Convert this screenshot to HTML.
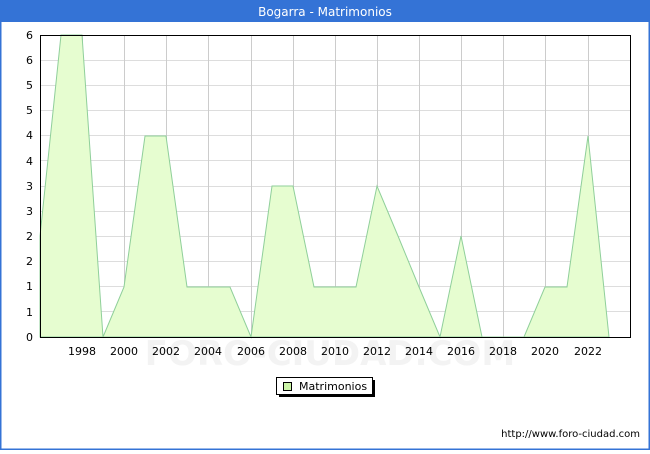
<!DOCTYPE html>
<html><head><style>
html,body{margin:0;padding:0;}
body{width:650px;height:450px;overflow:hidden;font-family:"DejaVu Sans","Liberation Sans",sans-serif;}
</style></head><body>
<svg width="650" height="450" xmlns="http://www.w3.org/2000/svg" font-family="DejaVu Sans, Liberation Sans, sans-serif">
<rect x="0" y="0" width="650" height="450" fill="#fff"/>
<rect x="0.5" y="0.5" width="649" height="449" fill="none" stroke="#3473d6" stroke-width="2"/>
<rect x="0" y="0" width="650" height="22" fill="#3473d6"/>
<text x="325" y="16" fill="#fff" font-size="12" text-anchor="middle">Bogarra - Matrimonios</text>
<g stroke="#dddddd" stroke-width="1">
<line x1="40" x2="630" y1="60.5" y2="60.5"/><line x1="40" x2="630" y1="85.5" y2="85.5"/>
<line x1="40" x2="630" y1="110.5" y2="110.5"/><line x1="40" x2="630" y1="135.5" y2="135.5"/>
<line x1="40" x2="630" y1="160.5" y2="160.5"/><line x1="40" x2="630" y1="186.5" y2="186.5"/>
<line x1="40" x2="630" y1="211.5" y2="211.5"/><line x1="40" x2="630" y1="236.5" y2="236.5"/>
<line x1="40" x2="630" y1="261.5" y2="261.5"/><line x1="40" x2="630" y1="286.5" y2="286.5"/>
<line x1="40" x2="630" y1="311.5" y2="311.5"/>
</g>
<g stroke="#cccccc" stroke-width="1">
<line x1="82.5" x2="82.5" y1="35" y2="337"/><line x1="124.5" x2="124.5" y1="35" y2="337"/>
<line x1="166.5" x2="166.5" y1="35" y2="337"/><line x1="208.5" x2="208.5" y1="35" y2="337"/>
<line x1="251.5" x2="251.5" y1="35" y2="337"/><line x1="293.5" x2="293.5" y1="35" y2="337"/>
<line x1="335.5" x2="335.5" y1="35" y2="337"/><line x1="377.5" x2="377.5" y1="35" y2="337"/>
<line x1="419.5" x2="419.5" y1="35" y2="337"/><line x1="461.5" x2="461.5" y1="35" y2="337"/>
<line x1="503.5" x2="503.5" y1="35" y2="337"/><line x1="545.5" x2="545.5" y1="35" y2="337"/>
<line x1="588.5" x2="588.5" y1="35" y2="337"/>
</g>
<text x="330" y="365" fill="#f3f3f3" font-size="34" font-weight="bold" text-anchor="middle">FORO-CIUDAD.COM</text>
<polygon fill="#e6fdd0" stroke="#8fcf9a" stroke-width="1" points="40,337 40,236 61,35 82,35 103,337 124,287 145,136 166,136 187,287 208,287 230,287 251,337 272,186 293,186 314,287 335,287 356,287 377,186 398,236 419,287 440,337 461,236 482,337 503,337 524,337 545,287 567,287 588,136 609,337"/>
<rect x="40.5" y="35.5" width="590" height="302" fill="none" stroke="#000" stroke-width="1"/>
<g font-size="11" fill="#000" text-anchor="end">
<text x="33" y="39">6</text><text x="33" y="64">6</text><text x="33" y="89">5</text><text x="33" y="114">5</text>
<text x="33" y="139">4</text><text x="33" y="165">4</text><text x="33" y="190">3</text><text x="33" y="215">3</text>
<text x="33" y="240">2</text><text x="33" y="265">2</text><text x="33" y="290">1</text><text x="33" y="316">1</text>
<text x="33" y="341">0</text>
</g>
<g font-size="11" fill="#000" text-anchor="middle">
<text x="82" y="355">1998</text><text x="124" y="355">2000</text><text x="166" y="355">2002</text>
<text x="208" y="355">2004</text><text x="251" y="355">2006</text><text x="293" y="355">2008</text>
<text x="335" y="355">2010</text><text x="377" y="355">2012</text><text x="419" y="355">2014</text>
<text x="461" y="355">2016</text><text x="503" y="355">2018</text><text x="545" y="355">2020</text>
<text x="588" y="355">2022</text>
</g>
<rect x="279" y="380" width="96" height="17" fill="#000"/>
<rect x="276.5" y="377.5" width="96" height="17" fill="#fff" stroke="#000" stroke-width="1"/>
<rect x="283.5" y="382.5" width="8" height="8" fill="#ccf5a8" stroke="#000" stroke-width="1"/>
<text x="299" y="390" font-size="11" fill="#000">Matrimonios</text>
<text x="640" y="437" font-size="10" fill="#000" text-anchor="end">http://www.foro-ciudad.com</text>
</svg>
</body></html>
